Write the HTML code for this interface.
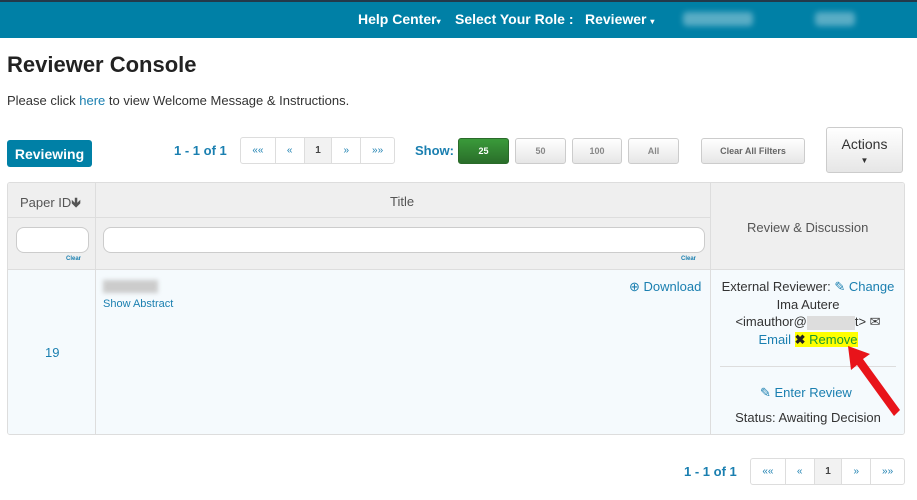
<!DOCTYPE html>
<html><head><meta charset="utf-8"><style>
*{box-sizing:border-box}
body{margin:0;width:917px;height:500px;background:#fff;font-family:"Liberation Sans",sans-serif;color:#333;position:relative;overflow:hidden;font-size:13px}
.a{position:absolute}
.top{left:0;top:0;width:917px;height:38px;background:#0080a6;border-top:2px solid #23394a}
.nav{color:#fff;font-weight:bold;font-size:14px;top:11px}
.blur{background:rgba(255,255,255,.35);filter:blur(3px);border-radius:4px}
a,.lk{color:#1a7fb0;text-decoration:none}
.pg{border:1px solid #ddd;border-radius:3px;display:flex;height:27px;background:#fff}
.pg span{border-left:1px solid #ddd;display:flex;align-items:center;justify-content:center;font-size:10px;color:#1a7fb0;height:100%}
.pg span:first-child{border-left:none}
.btn{border:1px solid #ccc;border-radius:3px;background:linear-gradient(#fff,#e6e6e6);font-size:9px;font-weight:bold;color:#888;display:flex;align-items:center;justify-content:center;height:26px;top:138px}
.tb{left:7px;top:182px;width:898px;height:253px;border:1px solid #ddd;border-radius:3px;overflow:hidden}
.c{position:absolute;border-left:1px solid #ddd}
</style></head><body>
<div class="a top"></div>
<div class="a nav" style="left:358px">Help Center<span style="font-size:8px">▾</span></div>
<div class="a nav" style="left:455px">Select Your Role :</div>
<div class="a nav" style="left:585px">Reviewer <span style="font-size:8px">▾</span></div>
<div class="a blur" style="left:683px;top:12px;width:70px;height:14px"></div>
<div class="a blur" style="left:815px;top:12px;width:40px;height:14px"></div>
<div class="a" style="left:7px;top:52px;font-size:22px;font-weight:bold;color:#222">Reviewer Console</div>
<div class="a" style="left:7px;top:93px;font-size:13px">Please click <a>here</a> to view Welcome Message &amp; Instructions.</div>
<div class="a" style="left:7px;top:140px;width:85px;height:27px;background:#0080a6;border-radius:3px;color:#fff;font-weight:bold;font-size:14px;display:flex;align-items:center;justify-content:center">Reviewing</div>
<div class="a" style="left:174px;top:143px;font-size:13px;font-weight:bold;color:#1a7fb0">1 - 1 of 1</div>
<div class="a pg" style="left:240px;top:137px;width:155px"><span style="width:34px">««</span><span style="width:29px">«</span><span style="width:28px;background:#f2f2f2;color:#444;font-weight:bold">1</span><span style="width:29px">»</span><span style="width:34px">»»</span></div>
<div class="a" style="left:415px;top:143px;font-size:13px;font-weight:bold;color:#1a7fb0">Show:</div>
<div class="a btn" style="left:458px;width:51px;background:linear-gradient(#3a9a3a,#2a6e2a);border-color:#2a6a2a;color:#fff">25</div>
<div class="a btn" style="left:515px;width:51px">50</div>
<div class="a btn" style="left:572px;width:50px">100</div>
<div class="a btn" style="left:628px;width:51px">All</div>
<div class="a btn" style="left:701px;width:104px;color:#666">Clear All Filters</div>
<div class="a btn" style="left:826px;top:127px;width:77px;height:46px;flex-direction:column;font-size:14px;font-weight:normal;color:#333"><div>Actions</div><div style="font-size:8px;margin-top:4px">▼</div></div>
<div class="a tb">
 <div class="a" style="left:0;top:0;width:898px;height:87px;background:#efefef;border-bottom:1px solid #ddd"></div>
 <div class="a" style="left:0;top:34px;width:703px;border-top:1px solid #ddd"></div>
 <div class="a" style="left:0;top:87px;width:898px;height:166px;background:#f5fafd"></div>
 <div class="c" style="left:87px;top:0;height:253px"></div>
 <div class="c" style="left:702px;top:0;height:253px"></div>
 <div class="a" style="left:12px;top:11px;font-size:13px;color:#555">Paper ID<b>🡻</b></div>
 <div class="a" style="left:382px;top:11px;font-size:13px;color:#555">Title</div>
 <div class="a" style="left:739px;top:37px;font-size:13px;color:#555">Review &amp; Discussion</div>
 <div class="a" style="left:8px;top:44px;width:73px;height:26px;background:#fff;border:1px solid #ccc;border-radius:8px"></div>
 <div class="a" style="left:95px;top:44px;width:602px;height:26px;background:#fff;border:1px solid #ccc;border-radius:8px"></div>
 <div class="a lk" style="left:58px;top:73px;font-size:6px;font-weight:bold">Clear</div>
 <div class="a lk" style="left:673px;top:73px;font-size:6px;font-weight:bold">Clear</div>
 <div class="a lk" style="left:37px;top:162px;font-size:13px">19</div>
 <div class="a" style="left:95px;top:97px;width:55px;height:13px;background:#ccc;filter:blur(2px)"></div>
 <div class="a lk" style="left:95px;top:115px;font-size:11px">Show Abstract</div>
 <div class="a lk" style="left:621px;top:96px;font-size:13px">⊕ Download</div>
 <div class="a" style="left:702px;top:95px;width:196px;text-align:center;font-size:13px;line-height:17.5px">
  External Reviewer: <span class="lk">✎ Change</span><br>Ima Autere<br>&lt;imauthor@<span style="display:inline-block;width:48px;height:14px;background:#ddd;vertical-align:middle"></span>t&gt; ✉<br>
  <span class="lk">Email</span> <span style="background:#ffff00"><b style="color:#222">✖</b> <span style="color:#1a9a30">Remove</span></span>
 </div>
 <div class="a" style="left:712px;top:183px;width:176px;border-top:1px solid #ddd"></div>
 <div class="a lk" style="left:752px;top:202px;font-size:13px">✎ Enter Review</div>
 <div class="a" style="left:702px;top:227px;width:196px;text-align:center;font-size:13px">Status: Awaiting Decision</div>
</div>
<svg class="a" style="left:838px;top:340px" width="70" height="80"><polygon points="10,6 32,14 25,19 62,70 56,76 19,25 13,30" fill="#e8141a"/></svg>
<div class="a" style="left:684px;top:464px;font-size:13px;font-weight:bold;color:#1a7fb0">1 - 1 of 1</div>
<div class="a pg" style="left:750px;top:458px;width:155px"><span style="width:34px">««</span><span style="width:29px">«</span><span style="width:28px;background:#f2f2f2;color:#444;font-weight:bold">1</span><span style="width:29px">»</span><span style="width:34px">»»</span></div>
</body></html>
